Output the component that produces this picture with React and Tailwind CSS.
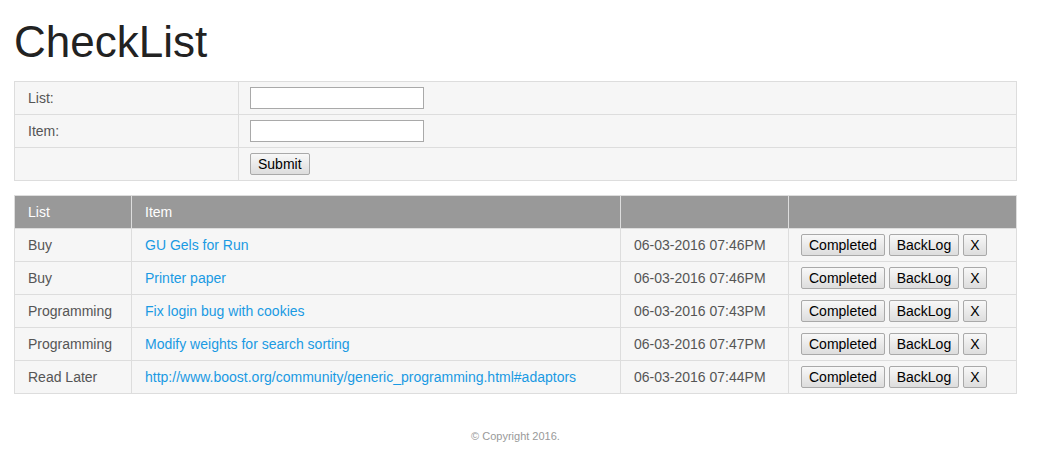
const ROWS = [
  { list: 'Buy', item: 'GU Gels for Run', date: '06-03-2016 07:46PM' },
  { list: 'Buy', item: 'Printer paper', date: '06-03-2016 07:46PM' },
  { list: 'Programming', item: 'Fix login bug with cookies', date: '06-03-2016 07:43PM' },
  { list: 'Programming', item: 'Modify weights for search sorting', date: '06-03-2016 07:47PM' },
  {
    list: 'Read Later',
    item: 'http://www.boost.org/community/generic_programming.html#adaptors',
    date: '06-03-2016 07:44PM',
  },
]

const cell = 'border border-[#dddddd] px-[13px] py-[6px] leading-5 align-middle text-left'
const btn =
  'inline-block h-[22px] border border-[#a9a9a9] rounded-[2px] bg-gradient-to-b from-[#f8f8f8] to-[#dddddd] text-black text-[14px] leading-5'
const input = 'h-[22px] w-[174px] border border-[#a9a9a9] bg-white block'

function FormTable() {
  return (
    <table className="w-full border-collapse bg-[#f6f6f6] text-[#555555]">
      <colgroup>
        <col className="w-[224px]" />
        <col />
      </colgroup>
      <tbody>
        <tr>
          <td className={cell}>List:</td>
          <td className="border border-[#dddddd] px-[11px] py-[5px]">
            <input className={input} />
          </td>
        </tr>
        <tr>
          <td className={cell}>Item:</td>
          <td className="border border-[#dddddd] px-[11px] py-[5px]">
            <input className={input} />
          </td>
        </tr>
        <tr>
          <td className={cell}>&nbsp;</td>
          <td className="border border-[#dddddd] px-[11px] py-[5px]">
            <button className={`${btn} px-[7px]`}>Submit</button>
          </td>
        </tr>
      </tbody>
    </table>
  )
}

function ItemsTable() {
  return (
    <table className="w-full border-collapse table-fixed text-[#555555]">
      <colgroup>
        <col className="w-[117px]" />
        <col className="w-[489px]" />
        <col className="w-[168px]" />
        <col />
      </colgroup>
      <thead>
        <tr className="bg-[#999999] text-white">
          <th className={`${cell} font-normal`}>List</th>
          <th className={`${cell} font-normal`}>Item</th>
          <th className={`${cell} font-normal`}>&nbsp;</th>
          <th className={`${cell} font-normal`}>&nbsp;</th>
        </tr>
      </thead>
      <tbody className="bg-[#f6f6f6]">
        {ROWS.map((r, i) => (
          <tr key={i}>
            <td className={cell}>{r.list}</td>
            <td className={`${cell} whitespace-nowrap`}>
              <a href="#" className="text-[#1a9ae3]">
                {r.item}
              </a>
            </td>
            <td className={cell}>{r.date}</td>
            <td className="border border-[#dddddd] px-[12px] py-[5px]">
              <div className="flex gap-[4px]">
                <button className={`${btn} px-[7px]`}>Completed</button>
                <button className={`${btn} px-[7px]`}>BackLog</button>
                <button className={`${btn} px-[6px]`}>X</button>
              </div>
            </td>
          </tr>
        ))}
      </tbody>
    </table>
  )
}

export default function App() {
  return (
    <div className="bg-white min-h-[476px] pl-[14px] pr-[24px] font-['Liberation_Sans',Arial,sans-serif] text-[14px]">
      <h1 className="pt-[18px] text-[44px] leading-[47px] text-[#222222] font-normal">CheckList</h1>
      <div className="mt-[16px]">
        <FormTable />
      </div>
      <div className="mt-[14px]">
        <ItemsTable />
      </div>
      <p className="mt-[34px] text-center text-[11px] text-[#999999]">© Copyright 2016.</p>
    </div>
  )
}
